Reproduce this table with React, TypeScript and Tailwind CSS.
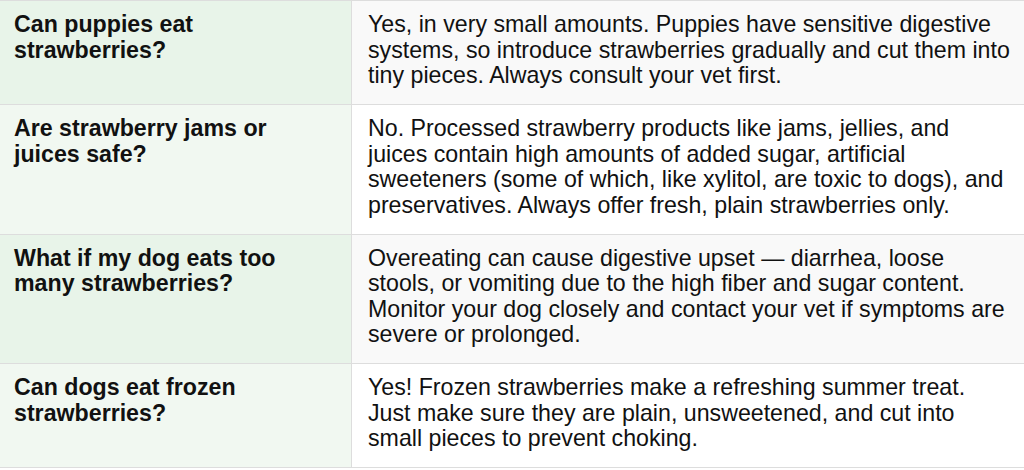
const rows = [
  {
    q: ["Can puppies eat", "strawberries?"],
    a: [
      "Yes, in very small amounts. Puppies have sensitive digestive",
      "systems, so introduce strawberries gradually and cut them into",
      "tiny pieces. Always consult your vet first.",
    ],
  },
  {
    q: ["Are strawberry jams or", "juices safe?"],
    a: [
      "No. Processed strawberry products like jams, jellies, and",
      "juices contain high amounts of added sugar, artificial",
      "sweeteners (some of which, like xylitol, are toxic to dogs), and",
      "preservatives. Always offer fresh, plain strawberries only.",
    ],
  },
  {
    q: ["What if my dog eats too", "many strawberries?"],
    a: [
      "Overeating can cause digestive upset \u2014 diarrhea, loose",
      "stools, or vomiting due to the high fiber and sugar content.",
      "Monitor your dog closely and contact your vet if symptoms are",
      "severe or prolonged.",
    ],
  },
  {
    q: ["Can dogs eat frozen", "strawberries?"],
    a: [
      "Yes! Frozen strawberries make a refreshing summer treat.",
      "Just make sure they are plain, unsweetened, and cut into",
      "small pieces to prevent choking.",
    ],
  },
];

export default function App() {
  return (
    <div className="w-[1024px] h-[470px] bg-white font-['Liberation_Sans',Arial,sans-serif] text-[23.2px] leading-[25.5px] text-[#111]">
      <div className="border-t border-[#dddddd]">
        {rows.map((r, i) => (
          <div
            key={i}
            className="grid grid-cols-[352px_1fr] border-b border-[#dddddd]"
          >
            <div
              className={`${
                i % 2 === 0 ? "bg-[#e8f4e9]" : "bg-[#f1f8f1]"
              } border-r border-[#dddddd] pl-[14px] pr-4 pt-[11px] pb-[15.5px] font-bold`}
            >
              {r.q.map((l, j) => (
                <div key={j} className="whitespace-nowrap">
                  {l}
                </div>
              ))}
            </div>
            <div
              className={`${
                i % 2 === 0 ? "bg-[#f9f9f9]" : "bg-white"
              } pl-4 pr-2 pt-[11px] pb-[15.5px]`}
            >
              {r.a.map((l, j) => (
                <div key={j} className="whitespace-nowrap">
                  {l}
                </div>
              ))}
            </div>
          </div>
        ))}
      </div>
    </div>
  );
}
